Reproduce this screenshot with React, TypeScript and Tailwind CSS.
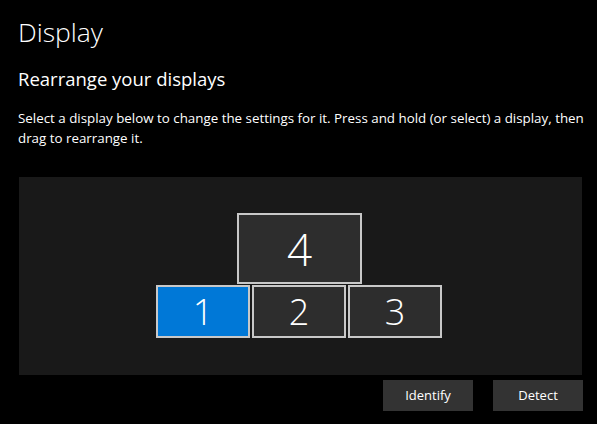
import React from "react";

// Monitors on the arrangement canvas (positions relative to the panel)
const displays = [
	{ id: 4, left: 218, top: 36, w: 125, h: 71, active: false, size: "text-[44px]" },
	{ id: 1, left: 137, top: 108, w: 94, h: 53, active: true, size: "text-[36px]" },
	{ id: 2, left: 233, top: 108, w: 94, h: 53, active: false, size: "text-[36px]" },
	{ id: 3, left: 329, top: 108, w: 94, h: 53, active: false, size: "text-[36px]" },
];

export default function App() {
	return (
		<div
			className="w-[597px] h-[424px] bg-black text-white overflow-hidden pl-[18px]"
			style={{ fontFamily: '"Open Sans", "Noto Sans", sans-serif' }}
		>
			<h1 className="pt-[12px] text-[26.5px] leading-[40px] font-light">Display</h1>
			<h2 className="mt-[13px] text-[18.5px] leading-[28px]">Rearrange your displays</h2>
			<p className="mt-[15px] text-[13.35px] leading-[20px] pr-[4px]">
				Select a display below to change the settings for it. Press and hold (or select) a display, then drag to rearrange it.
			</p>

			<div className="relative mt-[29px] ml-[1px] w-[563px] h-[198px] bg-[#191919]">
				{displays.map((d) => (
					<div
						key={d.id}
						className={`absolute flex items-center justify-center border-2 border-[#c8c8c8] font-light ${
							d.active ? "bg-[#0078d7]" : "bg-[#2d2d2d]"
						} ${d.size}`}
						style={{ left: d.left, top: d.top, width: d.w, height: d.h }}
					>
						{d.id}
					</div>
				))}
			</div>

			<div className="flex justify-end gap-[20px] mt-[5px] pr-[14px]">
				<button className="w-[90px] h-[31px] bg-[#333333] text-[13px]">Identify</button>
				<button className="w-[90px] h-[31px] bg-[#333333] text-[13px]">Detect</button>
			</div>
		</div>
	);
}
